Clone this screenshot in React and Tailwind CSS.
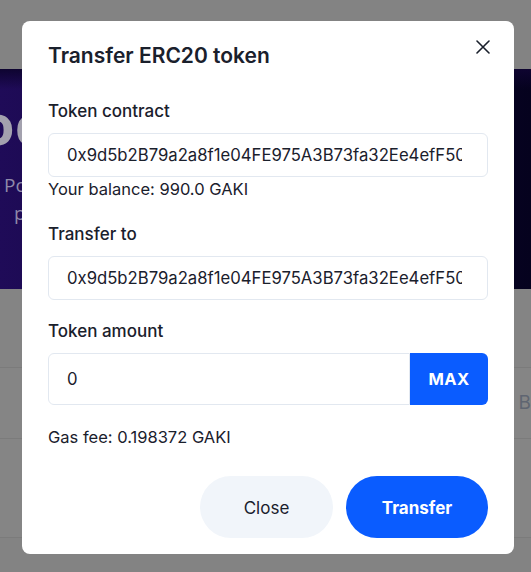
import React from "react";

const ADDR = "0x9d5b2B79a2a8f1e04FE975A3B73fa32Ee4efF50C";

export default function App() {
  return (
    <div className="relative w-[531px] h-[572px] overflow-hidden bg-[#838383] font-['Inter',sans-serif]">
      {/* background page (dimmed) */}
      <div className="h-[69px] bg-[#838383]" />
      <div className="h-[220px] bg-[linear-gradient(90deg,#1f0b58_0%,#14063e_45%,#05021e_100%)] flex flex-col overflow-hidden">
        <div className="h-[20px] bg-[linear-gradient(180deg,#0e0430,rgba(14,4,48,0))]" />
        <div className="-ml-[20px] mt-[4px] text-[56px] leading-[60px] font-bold text-[#a3a1ae] font-['Open_Sans',sans-serif] whitespace-nowrap">
          oc
        </div>
        <div className="ml-[4px] mt-[18px] text-[19px] leading-[28px] text-[#8f89aa] font-['Open_Sans',sans-serif] whitespace-nowrap">
          Po
        </div>
        <div className="ml-[14px] text-[19px] leading-[28px] text-[#8f89aa] font-['Open_Sans',sans-serif] whitespace-nowrap">
          pr
        </div>
      </div>
      <div className="h-[79px] bg-[#848484] border-b border-[#7b7b7b]" />
      <div className="h-[71px] bg-[#858585] border-b border-[#7b7b7b] flex items-center justify-end">
        <span className="text-[19px] text-[#5f6571] mr-0">B</span>
      </div>
      <div className="h-[99px] bg-[#858585] border-b border-[#7b7b7b]" />

      {/* modal */}
      <div className="absolute left-[22px] top-[21px] w-[492px] bg-white rounded-[8px] px-[26px] pt-[20px] pb-[16px] text-[#1a202c]">
        <button className="absolute top-[10px] right-[15px] w-8 h-8 flex items-center justify-center">
          <svg width="14" height="14" viewBox="0 0 14 14" fill="none">
            <path d="M1 1L13 13M13 1L1 13" stroke="#1a202c" strokeWidth="1.6" strokeLinecap="round" />
          </svg>
        </button>
        <h2 className="text-[21px] leading-[30px] font-semibold">Transfer ERC20 token</h2>

        <div className="mt-[28px] mb-[10px] text-[17px] leading-6 font-medium">Token contract</div>
        <input
          readOnly
          value={ADDR}
          className="block w-full h-[44px] border border-[#e2e8f0] rounded-md pl-[18px] pr-[25px] text-[16.7px] text-[#1a202c] outline-none"
        />
        <div className="text-[16.5px] leading-6">Your balance: 990.0 GAKI</div>

        <div className="mt-[21px] mb-[10px] text-[17px] leading-6 font-medium">Transfer to</div>
        <input
          readOnly
          value={ADDR}
          className="block w-full h-[44px] border border-[#e2e8f0] rounded-md pl-[18px] pr-[25px] text-[16.7px] text-[#1a202c] outline-none"
        />

        <div className="mt-[19px] mb-[10px] text-[17px] leading-6 font-medium">Token amount</div>
        <div className="flex h-[52px]">
          <input
            readOnly
            value="0"
            className="flex-1 min-w-0 h-full border border-[#e2e8f0] rounded-l-md pl-[18px] text-[16.7px] text-[#1a202c] outline-none"
          />
          <button className="w-[78px] h-full bg-[#0a5cff] rounded-r-md text-white font-bold text-[16.5px] tracking-[0.3px]">MAX</button>
        </div>

        <div className="mt-[20px] mb-[-1px] text-[16.5px] leading-6">Gas fee: 0.198372 GAKI</div>

        <div className="mt-[28px] flex justify-end gap-[13px]">
          <button className="w-[133px] h-[62px] pt-[3px] rounded-full bg-[#f1f5fa] text-[17px] text-[#1a202c] font-normal">Close</button>
          <button className="w-[142px] h-[62px] pt-[3px] rounded-full bg-[#0a5cff] text-[17px] text-white font-bold">Transfer</button>
        </div>
      </div>
    </div>
  );
}
